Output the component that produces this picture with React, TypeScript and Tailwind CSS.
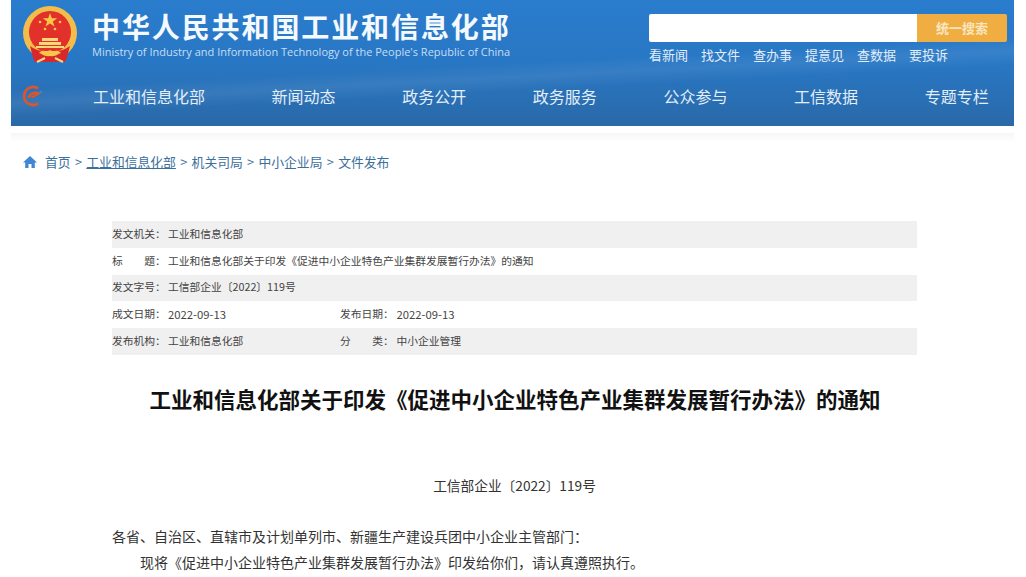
const NAV_ITEMS = ['工业和信息化部', '新闻动态', '政务公开', '政务服务', '公众参与', '工信数据', '专题专栏'];
const QUICK_LINKS = ['看新闻', '找文件', '查办事', '提意见', '查数据', '要投诉'];

function Emblem() {
  return (
    <svg viewBox="0 0 54 58" className="w-[54px] h-[58px] shrink-0">
      <circle cx="27" cy="27" r="27" fill="#f2bd4a" />
      <circle cx="27" cy="26" r="21" fill="#e2302a" />
      <path d="M27 7l1.8 5.2h5.4l-4.4 3.2 1.7 5.2-4.500-3.200-4.500 3.200 1.700-5.200-4.400-3.200h5.400z" fill="#f7c945" />
      <circle cx="17" cy="16" r="1.3" fill="#f7c945" />
      <circle cx="37" cy="16" r="1.3" fill="#f7c945" />
      <circle cx="22" cy="23" r="1.3" fill="#f7c945" />
      <circle cx="32" cy="23" r="1.3" fill="#f7c945" />
      <path d="M19 32h16v3H19zM16 36h22v3H16zM13 40h28v2H13z" fill="#f8d977" />
      <path d="M7 40c2 7 3 13 5 16h30c2-3 3-9 5-16-6 4-12 6-20 6s-14-2-20-6z" fill="#d9282a" />
      <path d="M16 47c4-5 7 0 11-3 4 3 7-2 11 3-4 1-5 4-11 3-6 1-7-2-11-3z" fill="#f5c649" />
      <path d="M14 56l8-4M40 56l-8-4" stroke="#f5d78c" strokeWidth="2" />
    </svg>
  );
}

function NavMark() {
  return (
    <svg viewBox="0 0 22 22" className="w-[22px] h-[22px] shrink-0">
      <path d="M17 18.500A9 9 0 1 1 17 3.500" fill="none" stroke="#d9562f" strokeWidth="2.800" />
      <path d="M7.500 13c1-4.500 6-6.500 10-4.500l-7 4" fill="none" stroke="#d9562f" strokeWidth="2.500" />
      <path d="M18.500 7.500l2.500-1" stroke="#3b8ed0" strokeWidth="1.500" />
    </svg>
  );
}

function HomeIcon() {
  return (
    <svg viewBox="0 0 14 12" className="w-[14px] h-[12px] shrink-0" fill="#3f86d6">
      <path d="M7 0L0 6.500h2.200V12h3.300V8h3v4h3.300V6.500H14z" />
    </svg>
  );
}

function InfoRow({ label, value, label2, value2, shaded, date }: { label: string; value: string; label2?: string; value2?: string; shaded?: boolean; date?: boolean }) {
  return (
    <div className={`flex items-center h-[26.800px] pb-[1px] text-[10.750px] text-[#444] whitespace-nowrap ${shaded ? 'bg-[#f0f0f0]' : ''}`}>
      <div className="w-[228px] flex items-center shrink-0">
        <span className="w-[56px] whitespace-pre shrink-0">{label}</span>
        <span className={date ? 'text-[11.300px]' : ''}>{value}</span>
      </div>
      {label2 && <span className="w-[56.500px] whitespace-pre shrink-0">{label2}</span>}
      {value2 && <span className={date ? 'text-[11.300px]' : ''}>{value2}</span>}
    </div>
  );
}

export default function App() {
  return (
    <div className="w-[1026px] h-[577px] overflow-hidden bg-white font-['Noto_Sans_CJK_SC','Liberation_Sans',sans-serif]">
      {/* 头部 */}
      <div className="ml-[11px] mr-[12px] h-[126px] bg-[linear-gradient(177deg,transparent_50%,rgba(255,255,255,0.07)_58%,transparent_66%),linear-gradient(to_bottom,#2a7ccd,#2877c4_50%,#2a69a8)] text-white">
        <div className="flex h-[70px]">
          <div className="flex pl-[12px] pt-[6px]">
            <Emblem />
            <div className="ml-[15px]">
              <div className="text-[28px] leading-[38px] font-bold tracking-[1.900px] whitespace-nowrap text-[#f4f9fe] mt-[1px]">中华人民共和国工业和信息化部</div>
              <div className="text-[11px] leading-[14px] text-[#c6def5] whitespace-nowrap font-['Open_Sans',sans-serif]">Ministry of Industry and Information Technology of the People's Republic of China</div>
            </div>
          </div>
          <div className="ml-auto mr-[7px] w-[358px] pt-[14px]">
            <div className="flex h-[28px] rounded-[2px] overflow-hidden">
              <div className="flex-1 bg-white" />
              <div className="w-[90px] bg-[#f0ae42] flex items-center justify-center text-[13px] font-bold text-[#f9e6c0]">统一搜索</div>
            </div>
            <div className="flex gap-[13px] mt-[4px] text-[13px] leading-[18px] text-[#e3eefa]">
              {QUICK_LINKS.map((link) => (
                <span key={link}>{link}</span>
              ))}
            </div>
          </div>
        </div>
        <div className="flex items-center h-[52px] pl-[10px]">
          <NavMark />
          <div className="flex gap-[66.600px] ml-[50px] text-[16px] text-[#e4eef8] whitespace-nowrap">
            {NAV_ITEMS.map((item) => (
              <span key={item}>{item}</span>
            ))}
          </div>
        </div>
      </div>
      <div className="ml-[11px] mr-[12px] h-[9px] mt-[7px] bg-gradient-to-b from-[#f6f6f6] to-white" />

      {/* 面包屑 */}
      <div className="flex items-center h-[20px] mt-[10px] pl-[23px] text-[12.800px] text-[#3b6f9c] whitespace-nowrap">
        <HomeIcon />
        <span className="ml-[8px]">首页</span>
        <span className="mx-[4.300px]">&gt;</span>
        <span className="underline">工业和信息化部</span>
        <span className="mx-[4.300px]">&gt;</span>
        <span>机关司局</span>
        <span className="mx-[4.300px]">&gt;</span>
        <span>中小企业局</span>
        <span className="mx-[4.300px]">&gt;</span>
        <span>文件发布</span>
      </div>

      {/* 文件信息 */}
      <div className="ml-[112px] w-[805px] mt-[49px]">
        <InfoRow label="发文机关：" value="工业和信息化部" shaded />
        <InfoRow label="标　　题：" value="工业和信息化部关于印发《促进中小企业特色产业集群发展暂行办法》的通知" />
        <InfoRow label="发文字号：" value="工信部企业〔2022〕119号" shaded />
        <InfoRow label="成文日期：" value="2022-09-13" label2="发布日期：" value2="2022-09-13" date />
        <InfoRow label="发布机构：" value="工业和信息化部" label2="分　　类：" value2="中小企业管理" shaded />
      </div>

      {/* 正文 */}
      <h1 className="mt-[27px] ml-[4px] text-center text-[21.500px] leading-[34px] font-bold text-[#111] whitespace-nowrap">工业和信息化部关于印发《促进中小企业特色产业集群发展暂行办法》的通知</h1>
      <div className="mt-[57px] ml-[3px] text-center text-[13.700px] leading-[24px] text-[#333]">工信部企业〔2022〕119号</div>
      <div className="ml-[112px] w-[805px] mt-[26px] text-[14px] leading-[26px] text-[#333]">
        <p>各省、自治区、直辖市及计划单列市、新疆生产建设兵团中小企业主管部门：</p>
        <p className="indent-[28px]">现将《促进中小企业特色产业集群发展暂行办法》印发给你们，请认真遵照执行。</p>
      </div>
    </div>
  );
}
